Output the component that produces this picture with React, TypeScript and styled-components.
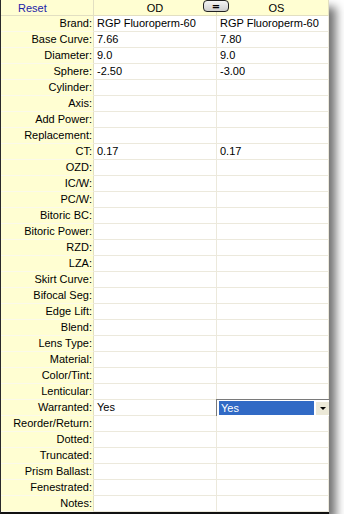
import React from "react";
import styled, { createGlobalStyle } from "styled-components";

const Global = createGlobalStyle`
  html, body { margin: 0; padding: 0; background: #ffffff; }
  body { font-family: "Liberation Sans", Arial, sans-serif; font-size: 11px; color: #000; }
`;

const Panel = styled.div`
  width: 328px;
  border-left: 1px solid #2a2a2a;
  border-bottom: 2px solid #111;
  background: #ffffff;
  box-shadow: 7px 7px 9px rgba(0, 0, 0, 0.55);
  overflow: hidden;
`;

const Grid = styled.div`
  display: grid;
  grid-template-columns: 93px 123px 112px;
  grid-auto-rows: 16px;
`;

const HeaderRow = styled.div`
  grid-column: 1 / -1;
  display: grid;
  grid-template-columns: 93px 123px 112px;
  position: relative;
  height: 16px;
`;

const HeadCell = styled.div<{ $pad?: number; $align?: string }>`
  background: #fffed2;
  border-bottom: 1px solid #e2dfc2;
  border-right: 1px solid #e2dfc2;
  display: flex;
  align-items: center;
  justify-content: ${(p) => p.$align || "center"};
  padding-left: ${(p) => p.$pad || 0}px;
  height: 15px;
  color: #000;
`;

const ResetLink = styled.span`
  color: #1c23a8;
  cursor: pointer;
`;

const EqualsButton = styled.button`
  position: absolute;
  left: 202px;
  top: 0;
  width: 26px;
  height: 12px;
  padding: 0;
  border: 1px solid #222;
  border-radius: 4px;
  background: linear-gradient(#f4f4f4, #cfcfcf);
  font-family: "DejaVu Sans", sans-serif;
  font-size: 10px;
  font-weight: bold;
  line-height: 9px;
  color: #000;
`;

const Label = styled.div`
  background: #fffed2;
  border-bottom: 1px solid #fbf9ea;
  border-right: 1px solid #e2dfc2;
  text-align: right;
  padding-right: 1px;
  line-height: 15px;
  white-space: nowrap;
`;

const Value = styled.div`
  background: #ffffff;
  border-bottom: 1px solid #ece9dc;
  border-right: 1px solid #ece9dc;
  padding-left: 3px;
  line-height: 15px;
  white-space: nowrap;
  position: relative;
`;

/* drop-down editor shown over the active cell */
const Combo = styled.div`
  position: absolute;
  left: -1px;
  top: -1px;
  width: 112px;
  height: 15px;
  display: flex;
  border-top: 1px solid #7a7a7a;
  border-left: 1px solid #7a7a7a;
  border-bottom: 1px solid #ffffff;
  background: #fff;
  padding: 1px 0 0 1px;
  box-sizing: content-box;
`;

const ComboText = styled.div`
  flex: 1;
  background: #316ac5;
  color: #fff;
  line-height: 14px;
  padding-left: 2px;
  margin: 0 1px 0 1px;
  height: 14px;
`;

const ComboArrow = styled.div`
  width: 15px;
  height: 14px;
  background: #ece9d8;
  border-top: 1px solid #fff;
  border-left: 1px solid #fff;
  box-sizing: border-box;
  display: flex;
  align-items: center;
  justify-content: center;
  &::after {
    content: "";
    border-left: 3px solid transparent;
    border-right: 3px solid transparent;
    border-top: 3px solid #000;
  }
`;

type Row = { label: string; od?: string; os?: string; osCombo?: boolean };

const rows: Row[] = [
  { label: "Brand:", od: "RGP Fluoroperm-60", os: "RGP Fluoroperm-60" },
  { label: "Base Curve:", od: "7.66", os: "7.80" },
  { label: "Diameter:", od: "9.0", os: "9.0" },
  { label: "Sphere:", od: "-2.50", os: "-3.00" },
  { label: "Cylinder:" },
  { label: "Axis:" },
  { label: "Add Power:" },
  { label: "Replacement:" },
  { label: "CT:", od: "0.17", os: "0.17" },
  { label: "OZD:" },
  { label: "IC/W:" },
  { label: "PC/W:" },
  { label: "Bitoric BC:" },
  { label: "Bitoric Power:" },
  { label: "RZD:" },
  { label: "LZA:" },
  { label: "Skirt Curve:" },
  { label: "Bifocal Seg:" },
  { label: "Edge Lift:" },
  { label: "Blend:" },
  { label: "Lens Type:" },
  { label: "Material:" },
  { label: "Color/Tint:" },
  { label: "Lenticular:" },
  { label: "Warranted:", od: "Yes", osCombo: true },
  { label: "Reorder/Return:" },
  { label: "Dotted:" },
  { label: "Truncated:" },
  { label: "Prism Ballast:" },
  { label: "Fenestrated:" },
  { label: "Notes:" },
];

export default function App() {
  return (
    <>
      <Global />
      <Panel>
        <Grid>
          <HeaderRow>
            <HeadCell $align="flex-start" $pad={17}>
              <ResetLink>Reset</ResetLink>
            </HeadCell>
            <HeadCell>OD</HeadCell>
            <HeadCell $pad={8}>OS</HeadCell>
            <EqualsButton>=</EqualsButton>
          </HeaderRow>
          {rows.map((r) => (
            <React.Fragment key={r.label}>
              <Label>{r.label}</Label>
              <Value>{r.od}</Value>
              <Value>
                {r.osCombo ? (
                  <Combo>
                    <ComboText>Yes</ComboText>
                    <ComboArrow />
                  </Combo>
                ) : (
                  r.os
                )}
              </Value>
            </React.Fragment>
          ))}
        </Grid>
      </Panel>
    </>
  );
}
